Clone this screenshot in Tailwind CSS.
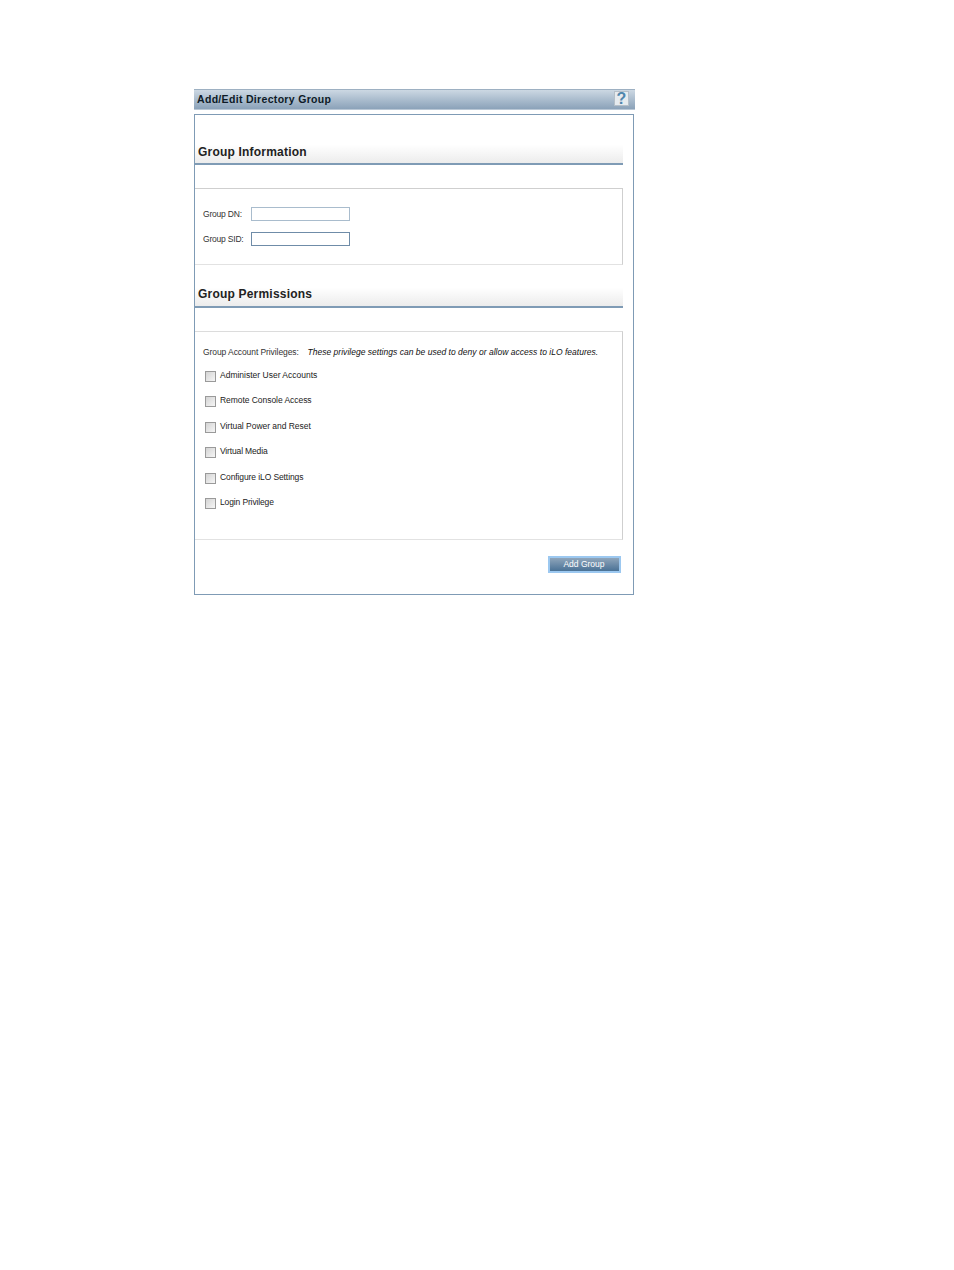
<!DOCTYPE html>
<html>
<head>
<meta charset="utf-8">
<script src="https://cdn.jsdelivr.net/npm/@tailwindcss/browser@4"></script>
</head>
<body class="bg-white font-['Liberation_Sans',Arial,sans-serif]">
<div class="w-[954px] h-[1270px] pl-[194px] pt-[89px]">
  <div class="w-[441px]">
    <div class="h-[21px] flex items-center justify-between pl-[3px] pr-[6px] border-t border-[#9db0c2] bg-gradient-to-b from-[#ccd8e3] to-[#8ba2b9] border-b border-b-[#b9c7d5]">
      <span class="text-[10.5px] font-bold text-[#0d1a26] tracking-[0.32px]">Add/Edit Directory Group</span>
      <div class="w-[15px] h-[15px] mb-[2px] bg-[#e6ebef] border border-[#b5bfc8] flex items-center justify-center">
        <span class="text-[16px] leading-none font-bold text-[#4f86ad]">?</span>
      </div>
    </div>
    <div class="mt-[4px] w-[440px] h-[481px] border border-[#7f9bb5] pt-[25px]">
      <div class="w-[428px] h-[25px] flex items-end pl-[3px] pb-[3px] border-b-2 border-[#7f9bb5] bg-gradient-to-b from-white from-[20%] to-[#ececec]">
        <span class="text-[12px] leading-[15px] font-bold text-[#222] tracking-[0.2px]">Group Information</span>
      </div>
      <div class="mt-[23px] w-[428px] h-[77px] border-t border-r border-b border-t-[#cfcfcf] border-r-[#cfcfcf] border-b-[#e2e2e2] pl-[8px] pt-[18px] flex flex-col gap-[11px]">
        <div class="flex items-center h-[14px]">
          <span class="w-[48px] text-[8.5px] tracking-[-0.2px] text-[#333]">Group DN:</span>
          <div class="w-[99px] h-[14px] border border-[#a9bccd] bg-white"></div>
        </div>
        <div class="flex items-center h-[14px]">
          <span class="w-[48px] text-[8.5px] tracking-[-0.2px] text-[#333]">Group SID:</span>
          <div class="w-[99px] h-[14px] border border-[#6f8ca8] bg-white"></div>
        </div>
      </div>
      <div class="mt-[18px] w-[428px] h-[25px] flex items-end pl-[3px] pb-[4px] border-b-2 border-[#7f9bb5] bg-gradient-to-b from-white from-[20%] to-[#ececec]">
        <span class="text-[12px] leading-[15px] font-bold text-[#222] tracking-[0.2px]">Group Permissions</span>
      </div>
      <div class="mt-[23px] w-[428px] h-[209px] border-t border-r border-b border-t-[#dcdcdc] border-r-[#cfcfcf] border-b-[#e2e2e2] pl-[8px] pt-[14px]">
        <div class="flex items-center h-[12px]">
          <span class="text-[8.5px] text-[#333] w-[104.5px] tracking-[-0.08px]">Group Account Privileges:</span>
          <span class="text-[8.5px] italic text-[#111] tracking-[0.02px]">These privilege settings can be used to deny or allow access to iLO features.</span>
        </div>
        <div class="mt-[11px] flex flex-col gap-[13.5px] pl-[2px]">
          <div class="flex items-center h-[12px]">
            <div class="w-[11px] h-[11px] mt-[2px] border border-[#9a9a9a] bg-gradient-to-br from-[#d4d4d4] to-[#f6f6f6]"></div>
            <span class="ml-[4px] text-[8.5px] text-[#222]">Administer User Accounts</span>
          </div>
          <div class="flex items-center h-[12px]">
            <div class="w-[11px] h-[11px] mt-[2px] border border-[#9a9a9a] bg-gradient-to-br from-[#d4d4d4] to-[#f6f6f6]"></div>
            <span class="ml-[4px] text-[8.5px] text-[#222] tracking-[-0.05px]">Remote Console Access</span>
          </div>
          <div class="flex items-center h-[12px]">
            <div class="w-[11px] h-[11px] mt-[2px] border border-[#9a9a9a] bg-gradient-to-br from-[#d4d4d4] to-[#f6f6f6]"></div>
            <span class="ml-[4px] text-[8.5px] text-[#222] tracking-[-0.03px]">Virtual Power and Reset</span>
          </div>
          <div class="flex items-center h-[12px]">
            <div class="w-[11px] h-[11px] mt-[2px] border border-[#9a9a9a] bg-gradient-to-br from-[#d4d4d4] to-[#f6f6f6]"></div>
            <span class="ml-[4px] text-[8.5px] text-[#222] tracking-[-0.15px]">Virtual Media</span>
          </div>
          <div class="flex items-center h-[12px]">
            <div class="w-[11px] h-[11px] mt-[2px] border border-[#9a9a9a] bg-gradient-to-br from-[#d4d4d4] to-[#f6f6f6]"></div>
            <span class="ml-[4px] text-[8.5px] text-[#222] tracking-[-0.1px]">Configure iLO Settings</span>
          </div>
          <div class="flex items-center h-[12px]">
            <div class="w-[11px] h-[11px] mt-[2px] border border-[#9a9a9a] bg-gradient-to-br from-[#d4d4d4] to-[#f6f6f6]"></div>
            <span class="ml-[4px] text-[8.5px] text-[#222] tracking-[-0.13px]">Login Privilege</span>
          </div>
        </div>
      </div>
      <div class="mt-[16px] w-[426px] flex justify-end">
        <div class="w-[73px] h-[17px] pb-[1px] pr-[1px] border-2 border-[#9cc8f0] bg-gradient-to-b from-[#8fa5ba] to-[#4a7296] flex items-center justify-center text-[8.5px] text-white">Add Group</div>
      </div>
    </div>
  </div>
</div>
</body>
</html>
